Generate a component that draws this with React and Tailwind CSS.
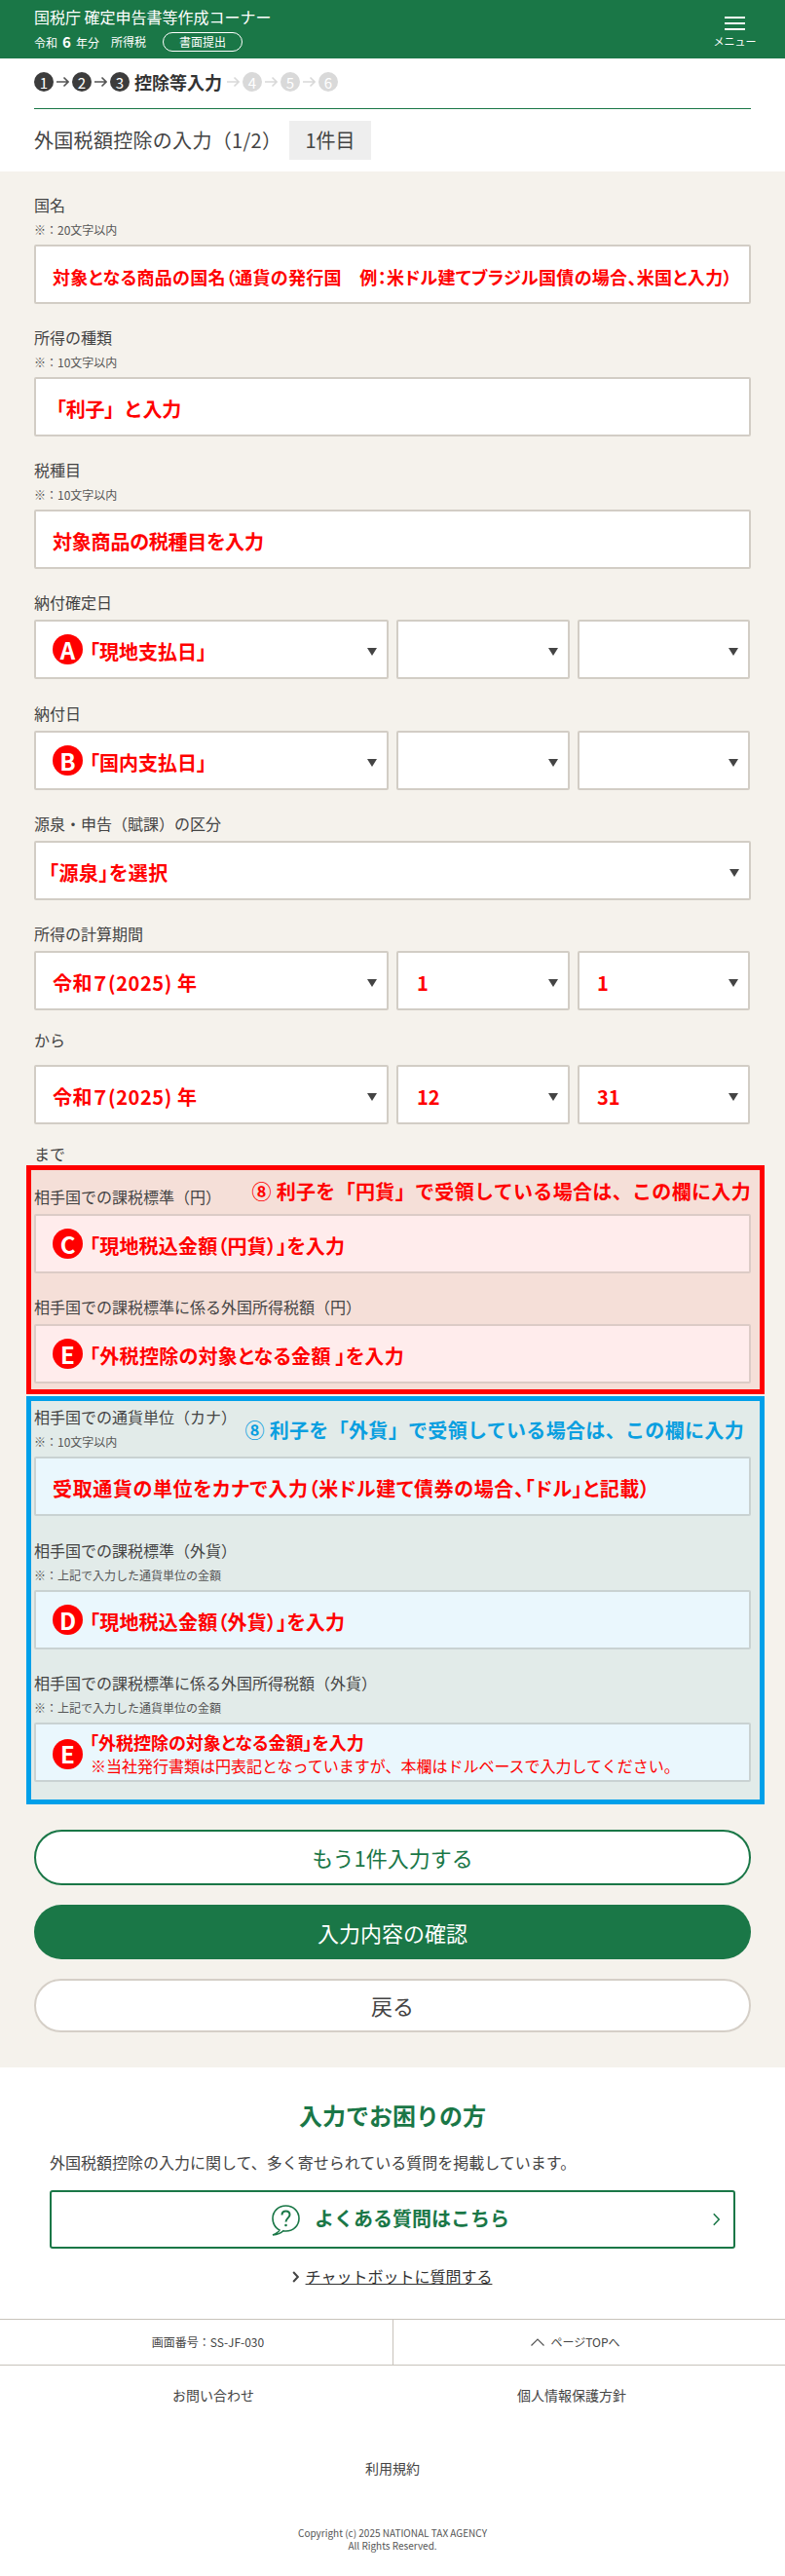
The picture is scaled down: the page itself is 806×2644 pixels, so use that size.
import React from "react";

const Tri = () => (
  <svg width="10" height="8" viewBox="0 0 10 8" className="absolute right-[10px] top-[27px]">
    <polygon points="0,0 10,0 5,8" fill="#444444" />
  </svg>
);

const Badge = ({ c }) => (
  <span className="flex h-[31px] w-[31px] shrink-0 items-center justify-center rounded-full bg-[#ff0000] text-[24px] font-bold leading-none text-white">
    {c}
  </span>
);

const Red = ({ children, className = "", size = "text-[20px]", feat = "[font-feature-settings:'palt']", color = "text-[#ff0000]" }) => (
  <span className={"whitespace-nowrap font-bold leading-[24px] " + size + " " + feat + " " + color + " " + className}>
    {children}
  </span>
);

const Label = ({ children }) => (
  <div className="h-6 whitespace-nowrap text-base leading-[22px] text-[#444444]">{children}</div>
);

const Sub = ({ children }) => (
  <div className="mt-[5px] h-4 whitespace-nowrap text-xs leading-4 text-[#555555]">{children}</div>
);

const Box = ({ children, bg = "bg-white", border = "border-[#d2cdc5]", className = "", select = false }) => (
  <div className={"relative flex h-[61px] items-center rounded-[2px] border-2 pl-[17px] " + bg + " " + border + " " + className}>
    {children}
    {select && <Tri />}
  </div>
);

const Dates = ({ a, b, c }) => (
  <div className="flex gap-2">
    <Box select className="w-[364px] pt-[4px]">{a}</Box>
    <Box select className="w-[178px] pt-[4px]">{b}</Box>
    <Box select className="w-[177px] pt-[4px]">{c}</Box>
  </div>
);

const Step = ({ n, on }) => (
  <span className={"flex h-5 w-5 items-center justify-center rounded-full text-[15px] leading-none text-white " + (on ? "bg-[#3c3c3c]" : "bg-[#d9d9d9]")}>
    {n}
  </span>
);

const Arrow = ({ on }) => (
  <svg width="13" height="12" viewBox="0 0 13 12" fill="none" stroke={on ? "#555555" : "#d9d9d9"} strokeWidth="1.6">
    <path d="M0 6H12M7.5 1.5L12 6L7.5 10.5" />
  </svg>
);

const Chevron = ({ className = "", w = 2 }) => (
  <svg viewBox="0 0 10 18" fill="none" stroke="currentColor" strokeWidth={w} className={className}>
    <path d="M1.5 1.5L8.5 9L1.5 16.5" />
  </svg>
);

const NoFeat = "[font-feature-settings:normal]";

export default function App() {
  return (
    <div className="w-[806px] bg-white text-[#333333] [font-family:'Noto_Sans_CJK_JP',sans-serif]">
      <header className="flex h-[60px] justify-between bg-[#1a7747] pl-[35px] pr-[30px] text-white">
        <div>
          <div className="mt-[5px] h-6 text-base leading-6">国税庁 確定申告書等作成コーナー</div>
          <div className="mt-1 flex h-5 items-center text-xs">
            <span className="w-[79px] whitespace-nowrap">令和<b className="mx-[5px] text-[15px]">6</b>年分</span>
            <span className="w-[53px]">所得税</span>
            <span className="flex h-5 w-[82px] items-center justify-center rounded-full border border-white">書面提出</span>
          </div>
        </div>
        <div className="flex w-[43px] flex-col items-center pt-[17px]">
          <div className="flex h-[14px] w-[21px] flex-col justify-between">
            <div className="h-[2px] bg-white" />
            <div className="h-[2px] bg-white" />
            <div className="h-[2px] bg-white" />
          </div>
          <div className="mt-[4px] whitespace-nowrap text-[11px] leading-[14px]">メニュー</div>
        </div>
      </header>

      <div className="px-[35px]">
        <div className="flex items-center gap-[3px] pt-[14px]">
          <Step n="1" on />
          <Arrow on />
          <Step n="2" on />
          <Arrow on />
          <Step n="3" on />
          <span className="ml-[2px] mr-[2px] whitespace-nowrap text-[18px] font-bold leading-5">控除等入力</span>
          <Arrow />
          <Step n="4" />
          <Arrow />
          <Step n="5" />
          <Arrow />
          <Step n="6" />
        </div>
        <div className="mt-[17px] h-px bg-[#1a7747]" />
        <div className="mt-3 mb-3 flex h-10 items-center">
          <span className="w-[262px] whitespace-nowrap text-[20px] tracking-[0.3px] text-[#444444]">外国税額控除の入力（1/2）</span>
          <span className="flex h-10 w-[84px] items-center justify-center bg-[#eeeeee] text-[20px] text-[#444444]">1件目</span>
        </div>
      </div>

      <main className="bg-[#f5f2ec] px-[35px] pt-[23px] pb-9">
        <Label>国名</Label>
        <Sub>※：20文字以内</Sub>
        <Box className="mt-[7px] pt-[4px]">
          <Red size="text-[18px]" className="tracking-[0.34px]">対象となる商品の国名（通貨の発行国　例：米ドル建てブラジル国債の場合、米国と入力）</Red>
        </Box>

        <div className="mt-[23px]"><Label>所得の種類</Label></div>
        <Sub>※：10文字以内</Sub>
        <Box className="mt-[7px] pt-[4px]"><Red feat={NoFeat} className="-ml-[6px] tracking-[-0.3px]">「利子」と入力</Red></Box>

        <div className="mt-[23px]"><Label>税種目</Label></div>
        <Sub>※：10文字以内</Sub>
        <Box className="mt-[7px] pt-[4px]"><Red className="tracking-[-0.2px]">対象商品の税種目を入力</Red></Box>

        <div className="mt-[23px]"><Label>納付確定日</Label></div>
        <div className="mt-[5px]">
          <Dates a={<><span className="-mt-[4px]"><Badge c="A" /></span><Red className="ml-[7px]">「現地支払日」</Red></>} />
        </div>

        <div className="mt-[24px]"><Label>納付日</Label></div>
        <div className="mt-[5px]">
          <Dates a={<><span className="-mt-[4px]"><Badge c="B" /></span><Red className="ml-[7px]">「国内支払日」</Red></>} />
        </div>

        <div className="mt-[23px]"><Label>源泉・申告（賦課）の区分</Label></div>
        <Box select className="mt-[5px] pt-[4px]"><Red className="-ml-[4px] tracking-[0.5px]">「源泉」を選択</Red></Box>

        <div className="mt-[23px]"><Label>所得の計算期間</Label></div>
        <div className="mt-[5px]">
          <Dates a={<Red className="tracking-[0.6px]">令和７(2025) 年</Red>} b={<Red className="ml-[2px]">1</Red>} c={<Red className="ml-[1px]">1</Red>} />
        </div>

        <div className="mt-[19px]"><Label>から</Label></div>
        <div className="mt-[13px]">
          <Dates a={<Red className="tracking-[0.6px]">令和７(2025) 年</Red>} b={<Red className="ml-[2px]">12</Red>} c={<Red className="ml-[1px]">31</Red>} />
        </div>

        <div className="mt-[19px]"><Label>まで</Label></div>

        <section className="relative -mt-px -ml-2 -mr-[14px] border-[5px] border-[#ff0000] bg-[#f5dfd8] pt-4 pb-[6px] pl-[3px] pr-[9px]">
          <Red feat={NoFeat} className="absolute right-[9px] top-[10px] tracking-[0.33px]">⑧ 利子を「円貨」で受領している場合は、この欄に入力</Red>
          <Label>相手国での課税標準（円）</Label>
          <Box className="mt-[5px] pt-[4px]" bg="bg-[#ffecec]" border="border-[#dccbc6]">
            <span className="-mt-[4px]"><Badge c="C" /></span>
            <Red className="ml-[7px] tracking-[0.2px]">「現地税込金額（円貨）」を入力</Red>
          </Box>
          <div className="mt-[23px]"><Label>相手国での課税標準に係る外国所得税額（円）</Label></div>
          <Box className="mt-[5px] pt-[4px]" bg="bg-[#ffecec]" border="border-[#dccbc6]">
            <span className="-mt-[4px]"><Badge c="E" /></span>
            <Red className="ml-[7px] tracking-[0.3px]">「外税控除の対象となる金額 」を入力</Red>
          </Box>
        </section>

        <section className="relative mt-[2px] -ml-2 -mr-[14px] border-[5px] border-[#00a0e9] bg-[#e2ebe9] pt-[5px] pb-[18px] pl-[3px] pr-[9px]">
          <Red feat={NoFeat} color="text-[#0a9fe0]" className="absolute right-[16px] top-[18px] tracking-[0.33px]">⑧ 利子を「外貨」で受領している場合は、この欄に入力</Red>
          <Label>相手国での通貨単位（カナ）</Label>
          <Sub>※：10文字以内</Sub>
          <Box className="mt-[7px] pt-[4px]" bg="bg-[#eaf7fd]" border="border-[#c9d2d2]">
            <Red className="tracking-[0.65px]">受取通貨の単位をカナで入力（米ドル建て債券の場合、「ドル」と記載）</Red>
          </Box>
          <div className="mt-[24px]"><Label>相手国での課税標準（外貨）</Label></div>
          <Sub>※：上記で入力した通貨単位の金額</Sub>
          <Box className="mt-[7px] pt-[4px]" bg="bg-[#eaf7fd]" border="border-[#c9d2d2]">
            <span className="-mt-[4px]"><Badge c="D" /></span>
            <Red className="ml-[7px] tracking-[0.2px]">「現地税込金額（外貨）」を入力</Red>
          </Box>
          <div className="mt-[23px]"><Label>相手国での課税標準に係る外国所得税額（外貨）</Label></div>
          <Sub>※：上記で入力した通貨単位の金額</Sub>
          <Box className="mt-[7px]" bg="bg-[#eaf7fd]" border="border-[#c9d2d2]">
            <span className="mt-[3px]"><Badge c="E" /></span>
            <div className="ml-[7px] flex flex-col pt-[3px]">
              <Red size="text-[18px]">「外税控除の対象となる金額」を入力</Red>
              <span className="whitespace-nowrap pl-[1px] text-base leading-[24px] text-[#ff0000]">※当社発行書類は円表記となっていますが、本欄はドルベースで入力してください。</span>
            </div>
          </Box>
        </section>

        <div className="mt-[26px] flex h-[57px] items-center justify-center rounded-full border-2 border-[#1a7747] bg-white text-[22px] text-[#1a7747]">
          もう1件入力する
        </div>
        <div className="mt-5 flex h-14 items-center justify-center rounded-full bg-[#1a7747] text-[22px] text-white">
          入力内容の確認
        </div>
        <div className="mt-5 flex h-[55px] items-center justify-center rounded-full border-2 border-[#d5cfc7] bg-white text-[22px] text-[#444444]">
          戻る
        </div>
      </main>

      <section className="pt-[31px]">
        <h2 className="text-center text-2xl font-bold leading-9 text-[#1a7747]">入力でお困りの方</h2>
        <p className="mt-[18px] whitespace-nowrap pl-[51px] text-base leading-6 text-[#444444]">
          外国税額控除の入力に関して、多く寄せられている質問を掲載しています。
        </p>
        <div className="relative mx-[51px] mt-[17px] flex h-[60px] items-center justify-center rounded-[3px] border-2 border-[#1a7747] pr-[4px]">
          <svg width="29" height="32" viewBox="0 0 29 32" fill="none" stroke="#1a7747" strokeWidth="1.6" className="mr-[15px] mt-[2px]">
            <path d="M8 26C3.5 23.5 1 19 1 14C1 7 6.5 1 14.5 1C22.5 1 28 7 28 14C28 21 22.5 27 14.5 27C13.5 27 12.5 26.9 11.8 26.7C9.5 29 6 30.5 1 31C4.5 29.5 7 28 8 26Z" />
            <path d="M10.5 10.5C10.5 8 12.2 6.5 14.5 6.5C16.8 6.5 18.5 8 18.5 10.2C18.5 13.5 14.5 13.8 14.5 17.5" strokeWidth="2" />
            <circle cx="14.5" cy="21" r="1.3" fill="#1a7747" stroke="none" />
          </svg>
          <span className="-mt-[3px] whitespace-nowrap text-[20px] font-bold text-[#1a7747]">よくある質問はこちら</span>
          <Chevron className="absolute right-[13px] top-[21px] h-[14px] w-[9px] text-[#1a7747]" />
        </div>
        <div className="mt-4 flex h-6 items-center justify-center pr-[1px]">
          <Chevron w={3} className="mr-[7px] mt-[2px] h-[12px] w-[7px] text-[#444444]" />
          <span className="whitespace-nowrap text-base leading-6 text-[#333333] underline">チャットボットに質問する</span>
        </div>
      </section>

      <footer className="mt-8 pb-[32px]">
        <div className="flex h-[48px] border-y border-[#c8c3bb] text-xs text-[#444444]">
          <div className="flex w-[404px] items-center justify-center border-r border-[#c8c3bb] pl-[24px]">画面番号：SS-JF-030</div>
          <div className="flex flex-1 items-center justify-center pr-[28px]">
            <svg width="14" height="8" viewBox="0 0 14 8" fill="none" stroke="#555555" strokeWidth="1.2" className="mr-[6px]">
              <path d="M0.5 7.5L7 1L13.5 7.5" />
            </svg>
            ページTOPへ
          </div>
        </div>
        <div className="mt-5 flex h-5 text-sm leading-5 text-[#444444]">
          <div className="w-[438px] text-center">お問い合わせ</div>
          <div className="w-[298px] text-center">個人情報保護方針</div>
        </div>
        <div className="mt-[55px] h-5 text-center text-sm leading-5 text-[#444444]">利用規約</div>
        <div className="mt-[50px] text-center text-[10px] leading-[13px] text-[#555555]">
          Copyright (c) 2025 NATIONAL TAX AGENCY
          <br />
          All Rights Reserved.
        </div>
      </footer>
    </div>
  );
}
